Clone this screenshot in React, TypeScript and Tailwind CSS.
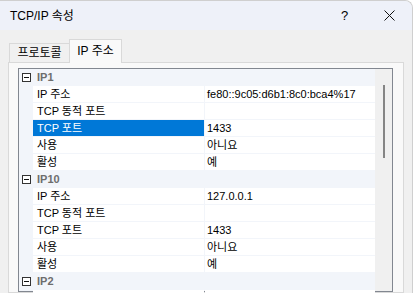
import React from 'react'

const FONT = { fontFamily: '"Liberation Sans", "Noto Sans CJK KR", sans-serif' }

type Prop = { name: string; value: string; selected?: boolean }

const GROUPS: { title: string; props: Prop[] }[] = [
  {
    title: 'IP1',
    props: [
      { name: 'IP 주소', value: 'fe80::9c05:d6b1:8c0:bca4%17' },
      { name: 'TCP 동적 포트', value: '' },
      { name: 'TCP 포트', value: '1433', selected: true },
      { name: '사용', value: '아니요' },
      { name: '활성', value: '예' },
    ],
  },
  {
    title: 'IP10',
    props: [
      { name: 'IP 주소', value: '127.0.0.1' },
      { name: 'TCP 동적 포트', value: '' },
      { name: 'TCP 포트', value: '1433' },
      { name: '사용', value: '아니요' },
      { name: '활성', value: '예' },
    ],
  },
  {
    title: 'IP2',
    // next row only peeks in at the bottom edge
    props: [{ name: '', value: '' }],
  },
]

function MinusBox() {
  return (
    <svg width="9" height="9" viewBox="0 0 9 9">
      <rect x="0.5" y="0.5" width="8" height="8" fill="#fff" stroke="#333" />
      <line x1="2" y1="4.5" x2="7" y2="4.5" stroke="#111" />
    </svg>
  )
}

function GroupRow({ title }: { title: string }) {
  return (
    <div className="flex h-[16px] shrink-0 items-center bg-[#f2f5fa]">
      <div className="flex w-[14px] justify-center">
        <MinusBox />
      </div>
      <span className="pl-[4px] font-bold text-[#6d6d6d]">{title}</span>
    </div>
  )
}

function PropRow({ p }: { p: Prop }) {
  return (
    <div className="flex h-[16px] shrink-0 items-center">
      <div className="w-[14px] self-stretch" />
      <div
        className={
          p.selected
            ? 'flex h-full w-[171px] items-center bg-[#0078d7] pl-[4px] text-white'
            : 'flex h-full w-[171px] items-center bg-white pl-[4px] text-black'
        }
      >
        {p.name}
      </div>
      <div className="ml-px flex h-full w-[170px] items-center bg-white pl-[2px] text-black">{p.value}</div>
    </div>
  )
}

export default function App() {
  return (
    <div className="h-[293px] w-[414px] overflow-hidden bg-white text-[11px] leading-none" style={FONT}>
      <div className="flex h-full w-[413px] flex-col overflow-hidden rounded-tr-[8px] border-r border-t border-[#cfcfcf] bg-[#f0f0f0]">
        {/* Title bar */}
        <div className="flex h-[29px] shrink-0 items-center bg-[#eef1f9]">
          <span className="pl-[10px] text-[12px] text-black">TCP/IP 속성</span>
          <div className="ml-auto flex h-full w-[45px] items-center justify-center text-[13px] text-black">?</div>
          <div className="flex h-full w-[45px] items-center justify-center">
            <svg width="11" height="11" viewBox="0 0 11 11">
              <path d="M0.5 0.5 L10.5 10.5 M10.5 0.5 L0.5 10.5" stroke="#111" strokeWidth="1" />
            </svg>
          </div>
        </div>

        {/* Tabs */}
        <div className="mt-[9px] flex h-[23px] shrink-0 items-end pl-[9px]">
          <div className="flex h-[19px] w-[60px] items-center justify-center border-l border-t border-[#d9d9d9] bg-[#f0f0f0] text-[12px] text-black">
            프로토콜
          </div>
          <div className="relative z-10 -mb-px flex h-[24px] w-[53px] items-center justify-center border-l border-r border-t border-[#d9d9d9] bg-[#f9f9f9] pb-[2px] text-[12px] text-black">
            IP 주소
          </div>
        </div>

        {/* Panel */}
        <div className="ml-[8px] flex min-h-0 w-[396px] flex-1 flex-col border border-[#d9d9d9] bg-[#f9f9f9] pl-[9px] pr-[10px] pt-[5px]">
          <div className="flex min-h-0 flex-1 border border-[#828790] bg-[#f2f5fa]">
            <div className="flex w-[356px] flex-col gap-px">
              {GROUPS.map((g) => (
                <React.Fragment key={g.title}>
                  <GroupRow title={g.title} />
                  {g.props.map((p, i) => (
                    <PropRow key={i} p={p} />
                  ))}
                </React.Fragment>
              ))}
            </div>
            <div className="flex w-[17px] justify-center bg-[#f0f0f0] pt-[16px]">
              <div className="h-[73px] w-[2px] bg-[#858585]" />
            </div>
          </div>
        </div>
      </div>
    </div>
  )
}
